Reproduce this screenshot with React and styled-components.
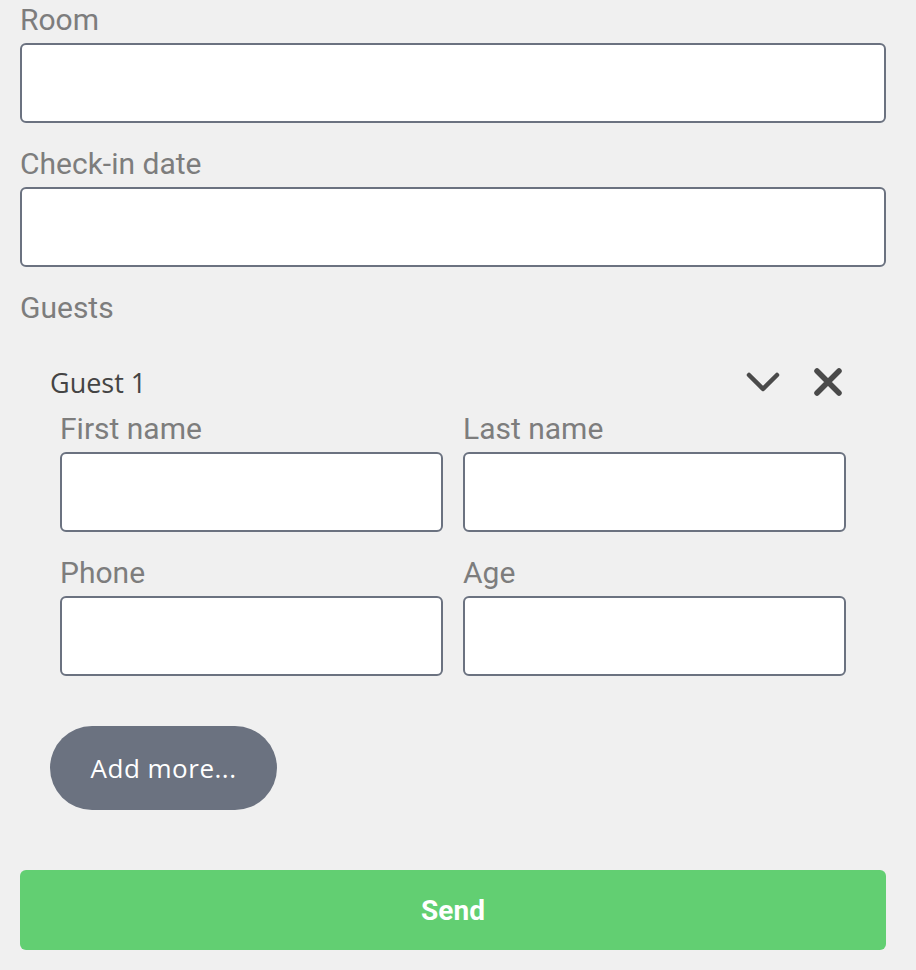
import React from "react";
import styled, { createGlobalStyle } from "styled-components";

const Global = createGlobalStyle`
  html, body { margin: 0; padding: 0; background: #f0f0f0; }
  body { font-family: Roboto, "Liberation Sans", sans-serif; }
  * { box-sizing: border-box; }
`;

const Form = styled.form`
  display: flex;
  flex-direction: column;
  padding: 0 30px 0 20px;
  width: 916px;
`;

const Field = styled.div`
  display: flex;
  flex-direction: column;
  gap: 10px;
  margin-bottom: ${(p) => p.$mb ?? 21}px;
  min-width: 0;
`;

const Label = styled.label`
  font-family: Roboto, "Liberation Sans", sans-serif;
  font-size: 30px;
  line-height: 27px;
  padding-top: 6px;
  color: #7d7d7d;
  white-space: nowrap;
`;

const Input = styled.input`
  height: 80px;
  width: 100%;
  border: 2px solid #6b7280;
  border-radius: 6px;
  background: #fff;
  font-size: 26px;
  padding: 0 14px;
  outline: none;
`;

const GuestCard = styled.div`
  display: flex;
  flex-direction: column;
  padding: 38px 30px 0 30px;
`;

const GuestHeader = styled.div`
  display: flex;
  align-items: center;
  justify-content: space-between;
  height: 46px;
`;

const GuestTitle = styled.span`
  font-family: "Open Sans", Inter, sans-serif;
  font-size: 27px;
  color: #444;
`;

const IconRow = styled.div`
  display: flex;
  align-items: center;
  gap: 33px;
  padding-right: 13px;
`;

const IconButton = styled.button`
  background: none;
  border: none;
  padding: 0;
  display: flex;
  cursor: pointer;
`;

const FieldsGrid = styled.div`
  display: grid;
  grid-template-columns: 1fr 1fr;
  column-gap: 20px;
  padding: 4px 10px 0 10px;
`;

const AddMore = styled.button`
  align-self: flex-start;
  margin-top: 50px;
  width: 227px;
  height: 84px;
  border: none;
  border-radius: 42px;
  background: #6b7280;
  color: #fff;
  font-family: "Open Sans", Inter, sans-serif;
  font-size: 26px;
  letter-spacing: 0.5px;
  cursor: pointer;
`;

const Send = styled.button`
  margin-top: 60px;
  height: 80px;
  width: 100%;
  border: none;
  border-radius: 6px;
  background: #62cf72;
  color: #fff;
  font-family: Roboto, "Liberation Sans", sans-serif;
  font-weight: 700;
  font-size: 28px;
  cursor: pointer;
`;

const Chevron = () => (
  <svg width="34" height="24" viewBox="0 0 34 24">
    <path d="M3 5 L17 19 L31 5" fill="none" stroke="#4a4a4a" strokeWidth="4.5" strokeLinecap="round" strokeLinejoin="round" />
  </svg>
);

const Cross = () => (
  <svg width="30" height="30" viewBox="0 0 30 30">
    <path d="M4 4 L26 26 M26 4 L4 26" fill="none" stroke="#4a4a4a" strokeWidth="5.5" strokeLinecap="round" />
  </svg>
);

export default function App() {
  return (
    <>
      <Global />
      <Form onSubmit={(e) => e.preventDefault()}>
        <Field>
          <Label>Room</Label>
          <Input />
        </Field>
        <Field>
          <Label>Check-in date</Label>
          <Input />
        </Field>
        <Field $mb={0}>
          <Label>Guests</Label>
        </Field>
        <GuestCard>
          <GuestHeader>
            <GuestTitle>Guest 1</GuestTitle>
            <IconRow>
              <IconButton type="button"><Chevron /></IconButton>
              <IconButton type="button"><Cross /></IconButton>
            </IconRow>
          </GuestHeader>
          <FieldsGrid>
            <Field>
              <Label>First name</Label>
              <Input />
            </Field>
            <Field>
              <Label>Last name</Label>
              <Input />
            </Field>
            <Field $mb={0}>
              <Label>Phone</Label>
              <Input />
            </Field>
            <Field $mb={0}>
              <Label>Age</Label>
              <Input />
            </Field>
          </FieldsGrid>
          <AddMore type="button">Add more...</AddMore>
        </GuestCard>
        <Send type="submit">Send</Send>
      </Form>
    </>
  );
}
